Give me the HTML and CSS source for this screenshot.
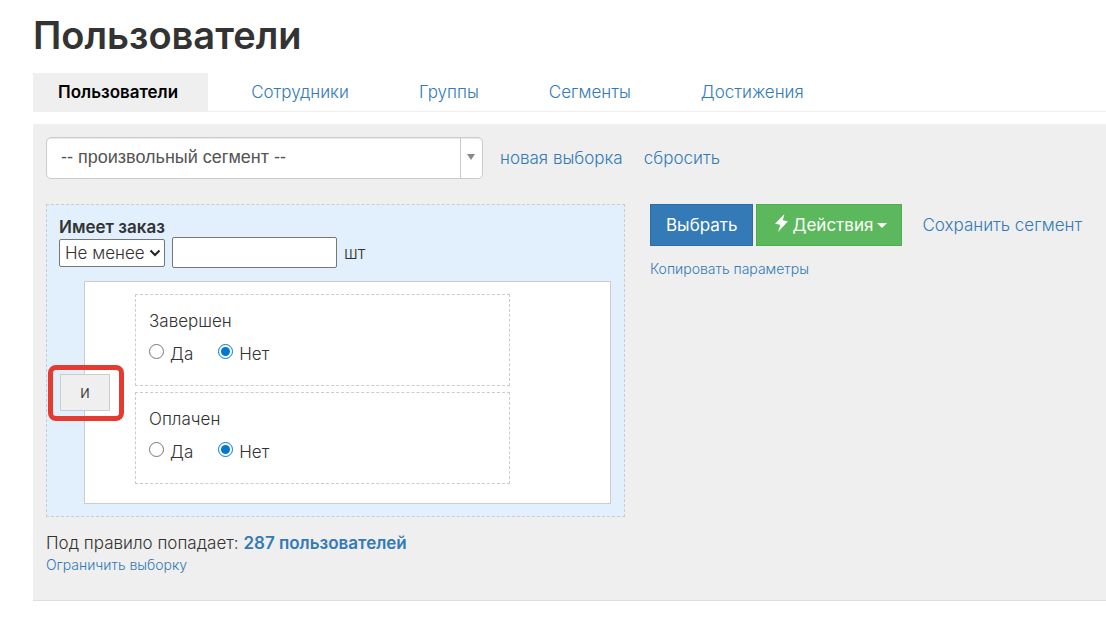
FILE: index.html
```html
<!DOCTYPE html>
<html lang="ru">
<head>
<meta charset="utf-8">
<meta name="viewport" content="width=device-width, initial-scale=1">
<title>Пользователи</title>
<link rel="stylesheet" href="styles.css">
</head>
<body>
<main class="page">
  <h1 class="title">Пользователи</h1>
  <nav class="tabs">
    <a class="tab tab-active" href="#users">Пользователи</a>
    <a class="tab" href="#staff">Сотрудники</a>
    <a class="tab" href="#groups">Группы</a>
    <a class="tab" href="#segments">Сегменты</a>
    <a class="tab" href="#awards">Достижения</a>
  </nav>
  <section class="panel">
    <div class="segment-row">
      <div class="segment">
        <select class="segment-select" aria-label="Сегмент">
          <option>-- произвольный сегмент --</option>
        </select>
        <span class="segment-arrow"></span>
      </div>
      <div class="segment-links">
        <a href="#new">новая выборка</a>
        <a href="#reset">сбросить</a>
      </div>
    </div>
    <div class="columns">
      <div class="rules">
        <div class="rule">
          <strong class="rule-title">Имеет заказ</strong>
          <div class="rule-count">
            <div class="compare">
              <select class="compare-select" aria-label="Условие">
                <option>Не менее</option>
              </select>
              <svg class="compare-arrow" viewBox="0 0 12 8" aria-hidden="true"><path d="M1.500 1.500 6 6l4.500-4.500" fill="none" stroke="#222" stroke-width="2"/></svg>
            </div>
            <input class="count-input" id="count" type="text">
            <label for="count">шт</label>
          </div>
          <div class="group">
            <fieldset class="condition">
              <legend class="condition-title">Завершен</legend>
              <div class="options">
                <label class="option"><input class="radio" type="radio" name="finished">Да</label>
                <label class="option"><input class="radio" type="radio" name="finished" checked>Нет</label>
              </div>
            </fieldset>
            <fieldset class="condition">
              <legend class="condition-title">Оплачен</legend>
              <div class="options">
                <label class="option"><input class="radio" type="radio" name="paid">Да</label>
                <label class="option"><input class="radio" type="radio" name="paid" checked>Нет</label>
              </div>
            </fieldset>
            <div class="joiner"><button class="joiner-button" type="button">и</button></div>
          </div>
        </div>
        <div class="result">Под правило попадает: <a class="result-link" href="#result">287 пользователей</a></div>
        <a class="small-link" href="#limit">Ограничить выборку</a>
      </div>
      <div class="side">
        <div class="actions">
          <button class="btn btn-primary" type="button">Выбрать</button>
          <button class="btn btn-success" type="button">
            <svg class="bolt" viewBox="0 0 13 18" aria-hidden="true"><path d="M9.500 0 0 9.700l5.300 1L3 18l10-10.700-5.300-1z" fill="#fff"/></svg>
            <span>Действия</span>
            <span class="caret"></span>
          </button>
          <a class="save-link" href="#save">Сохранить сегмент</a>
        </div>
        <a class="small-link" href="#copy">Копировать параметры</a>
      </div>
    </div>
  </section>
</main>
</body>
</html>
```
FILE: styles.css
```css
* { box-sizing: border-box; }
body {
  margin: 0;
  background: #fff;
  color: #333;
  font: 300 17px/24px Inter, "Open Sans", sans-serif;
}
a { color: #337ab7; text-decoration: none; }
button, input, select { font: inherit; color: inherit; margin: 0; }
.page { padding: 11px 0 20px 33px; }
.title { margin: 0 0 14px; font-size: 38px; line-height: 48px; font-weight: 600; }
.tabs { display: flex; gap: 18px; border-bottom: 1px solid #eee; margin-bottom: 12px; }
.tab { padding: 7px 27px 7px 25px; }
.tab-active { padding-right: 30px; background: #efefef; color: #000; font-weight: 600; }
.panel { background: #efefef; border-bottom: 1px solid #ddd; padding: 13px 13px 25px; }
.segment-row { display: flex; align-items: center; gap: 17px; margin-bottom: 25px; }
.segment { position: relative; flex: 0 1 437px; }
.segment-select {
  appearance: none;
  width: 100%;
  height: 42px;
  padding: 0 40px 2px 14px;
  border: 1px solid #ccc;
  border-radius: 5px;
  background: #fff;
  box-shadow: inset 0 1px 1px #e8e8e8;
  color: #555;
  font: 400 18px "Liberation Sans", Arial, sans-serif;
}
.segment-arrow {
  position: absolute;
  top: 1px;
  right: 1px;
  bottom: 1px;
  width: 22px;
  border-left: 1px solid #ccc;
  display: grid;
  place-items: center;
  padding: 0 2px 2px 0;
  pointer-events: none;
}
.segment-arrow::before {
  content: "";
  border: 4px solid transparent;
  border-top: 6px solid #888;
  border-bottom: 0;
}
.segment-links { display: flex; gap: 21px; }
.columns { display: grid; grid-template-columns: 579fr 443fr; gap: 25px; }
.rule {
  border: 1px dashed #ccc;
  background: #e2f0fe;
  padding: 12px 13px 12px 12px;
  margin-bottom: 14px;
}
.rule-title { display: block; line-height: 20px; font-weight: 600; }
.rule-count { display: flex; align-items: center; gap: 7px; margin-bottom: 13px; }
.compare { position: relative; }
.compare-select {
  appearance: none;
  display: block;
  width: 106px;
  height: 28px;
  padding: 0 18px 0 5px;
  border: 1px solid #767676;
  border-radius: 2px;
  background: #fff;
}
.compare-arrow { position: absolute; right: 4px; top: 10px; width: 12px; height: 8px; pointer-events: none; }
.count-input { width: 165px; height: 31px; border: 1px solid #767676; border-radius: 2px; background: #fff; }
.group {
  position: relative;
  display: grid;
  gap: 6px;
  margin-left: 25px;
  padding: 12px 100px 19px 50px;
  border: 1px solid #ccc;
  background: #fff;
}
.condition { margin: 0; min-width: 0; padding: 14px 13px 19px; border: 1px dashed #ccc; }
.condition-title { float: left; width: 100%; padding: 0; margin-bottom: 9px; }
.options { clear: both; display: flex; gap: 25px; }
.option { display: flex; align-items: center; gap: 6px; }
.radio { width: 15px; height: 15px; margin-bottom: 6px; accent-color: #0078d7; }
.joiner {
  position: absolute;
  left: 1px;
  top: 50%;
  transform: translate(-50%, -50%);
  padding: 4px 9px 5px 7px;
  border: 5px solid #e53a30;
  border-radius: 8px;
}
.joiner-button { display: block; width: 50px; height: 37px; border: 1px solid #ccc; background: #efefef; padding: 0; }
.small-link { display: block; font-size: 14px; line-height: 20px; }
.result-link { font-weight: 600; }
.actions { display: flex; align-items: center; gap: 3px; margin-bottom: 13px; white-space: nowrap; }
.btn {
  display: flex;
  align-items: center;
  height: 42px;
  padding: 0 14px 0 15px;
  border: 1px solid #2e6da4;
  background: #337ab7;
  color: #fff;
  font-weight: 400;
}
.btn-success { border-color: #4cae4c; background: #5cb85c; padding-left: 18px; }
.bolt { width: 13px; height: 18px; margin: 0 5px 4px 0; }
.caret { margin-left: 4px; border: 5px solid transparent; border-top-color: #fff; border-bottom: 0; }
.save-link { margin-left: 17px; }
```
